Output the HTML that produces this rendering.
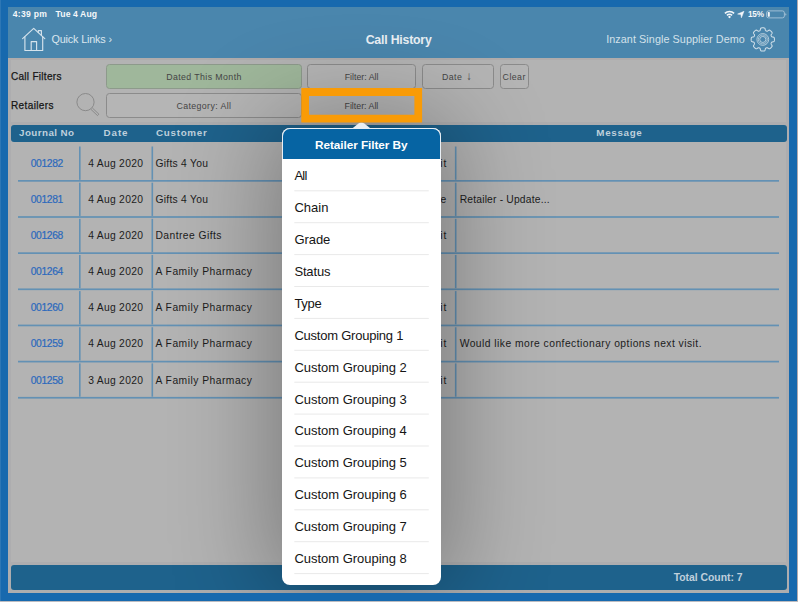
<!DOCTYPE html>
<html lang="en">
<head>
<meta charset="utf-8">
<title>Call History</title>
<style>
html,body{margin:0;padding:0;}
body{width:798px;height:602px;overflow:hidden;background:#1769ae;position:relative;font-family:"Liberation Sans",sans-serif;}
#edgeR{position:absolute;left:797px;top:0;width:1px;height:602px;background:#b3aaad;}
#edgeB{position:absolute;left:0;top:601px;width:798px;height:1px;background:#bdbcc0;}
#edgeL{position:absolute;left:0;top:0;width:1px;height:601px;background:#2d77b5;}
#app{position:absolute;left:0;top:0;width:798px;height:602px;background:#adadaf;clip-path:inset(7px 9px 9px 8px);}
#app div,#app svg,#ann div,#ann svg,#ann span{position:absolute;}
.t{position:absolute;white-space:nowrap;}
.stroke{-webkit-text-stroke:0.25px #161616;}
.jn{-webkit-text-stroke:0.2px #2b69bd;}
#hdr{left:8px;top:7px;width:781px;height:50.5px;background:#4a86ad;}
#hdrline{left:8px;top:57.5px;width:781px;height:2px;background:#b0acac;}
.btn{box-sizing:border-box;border:1px solid #8b8b8b;border-radius:3.5px;background:#b5b5b5;}
#thead{left:11px;top:124.7px;width:776px;height:17.6px;border-radius:3px;background:#1e628c;}
#tfoot{left:11px;top:564.5px;width:776px;height:25.5px;border-radius:3px;background:#1e628c;}
.hl{left:18px;width:761px;height:1.8px;background:#6391b4;}
.vl{width:1.6px;height:33.3px;background:#6391b4;}
#pop{left:282px;top:128px;width:159px;height:457.4px;border-radius:8px;background:#fff;box-shadow:0 0 100px 10px rgba(0,0,0,0.33);}
#pophead{left:0;top:0;width:159px;height:31px;border-radius:8px 8px 0 0;background:#0664a3;box-sizing:border-box;border:1px solid #e9eff5;border-bottom:none;}
.sep{left:12.4px;width:134.5px;height:1px;background:#e8e8e8;}
#orange{left:301.3px;top:88px;width:120.8px;height:34.5px;box-sizing:border-box;border:7.7px solid #f99b06;}
</style>
</head>
<body>
<div id="app">
  <div id="hdr"></div>
  <div id="hdrline"></div>
  <div style="left:10.6px;top:59.5px;width:775.6px;height:62.2px;background:#b3b3b3"></div>
  <div style="left:10.6px;top:124.7px;width:775.6px;height:437.5px;background:#b3b3b3"></div>
  <!-- house -->
  <svg style="left:20px;top:25px" width="28" height="28" viewBox="20 25 28 28" fill="none" stroke="#d6e3ec" stroke-width="1.15" stroke-linejoin="round" stroke-linecap="round">
    <path d="M22.6 38.6 L33.7 28.3 L44.8 38.6"/>
    <path d="M24.9 36.8 V50.5 H42.7 V36.8"/>
    <path d="M31.2 50.5 V41.6 H36.6 V50.5"/>
    <path d="M38.3 32.4 V30.6 H41.4 V35.3"/>
  </svg>
  <!-- gear -->
  <svg style="left:749px;top:26px" width="28" height="28" viewBox="-14 -14 28 28" fill="none" stroke="#d0dfe9" stroke-width="1.1">
    <g transform="translate(-0.2,-0.55) scale(0.95)"><path d="M0.00 -12.24 L0.16 -12.24 L0.32 -12.24 L0.48 -12.23 L0.64 -12.23 L0.80 -12.21 L0.96 -12.20 L1.12 -12.18 L1.28 -12.16 L1.44 -12.13 L1.59 -12.09 L1.75 -12.04 L1.89 -11.96 L2.04 -11.86 L2.17 -11.71 L2.29 -11.51 L2.39 -11.24 L2.47 -10.92 L2.54 -10.57 L2.60 -10.24 L2.67 -9.95 L2.74 -9.71 L2.82 -9.53 L2.92 -9.40 L3.02 -9.29 L3.12 -9.20 L3.23 -9.13 L3.34 -9.07 L3.46 -9.01 L3.57 -8.96 L3.69 -8.91 L3.81 -8.86 L3.93 -8.82 L4.05 -8.78 L4.17 -8.74 L4.30 -8.72 L4.43 -8.70 L4.58 -8.71 L4.74 -8.74 L4.93 -8.81 L5.15 -8.92 L5.40 -9.08 L5.68 -9.27 L5.97 -9.47 L6.26 -9.64 L6.52 -9.76 L6.75 -9.82 L6.94 -9.83 L7.12 -9.80 L7.28 -9.74 L7.42 -9.67 L7.56 -9.59 L7.69 -9.50 L7.82 -9.40 L7.95 -9.31 L8.07 -9.20 L8.19 -9.10 L8.31 -8.99 L8.43 -8.88 L8.54 -8.77 L8.66 -8.66 L8.77 -8.54 L8.88 -8.43 L8.99 -8.31 L9.10 -8.19 L9.20 -8.07 L9.31 -7.95 L9.40 -7.82 L9.50 -7.69 L9.59 -7.56 L9.67 -7.42 L9.74 -7.28 L9.80 -7.12 L9.83 -6.94 L9.82 -6.75 L9.76 -6.52 L9.64 -6.26 L9.47 -5.97 L9.27 -5.68 L9.08 -5.40 L8.92 -5.15 L8.81 -4.93 L8.74 -4.74 L8.71 -4.58 L8.70 -4.43 L8.72 -4.30 L8.74 -4.17 L8.78 -4.05 L8.82 -3.93 L8.86 -3.81 L8.91 -3.69 L8.96 -3.57 L9.01 -3.46 L9.07 -3.34 L9.13 -3.23 L9.20 -3.12 L9.29 -3.02 L9.40 -2.92 L9.53 -2.82 L9.71 -2.74 L9.95 -2.67 L10.24 -2.60 L10.57 -2.54 L10.92 -2.47 L11.24 -2.39 L11.51 -2.29 L11.71 -2.17 L11.86 -2.04 L11.96 -1.89 L12.04 -1.75 L12.09 -1.59 L12.13 -1.44 L12.16 -1.28 L12.18 -1.12 L12.20 -0.96 L12.21 -0.80 L12.23 -0.64 L12.23 -0.48 L12.24 -0.32 L12.24 -0.16 L12.24 -0.00 L12.24 0.16 L12.24 0.32 L12.23 0.48 L12.23 0.64 L12.21 0.80 L12.20 0.96 L12.18 1.12 L12.16 1.28 L12.13 1.44 L12.09 1.59 L12.04 1.75 L11.96 1.89 L11.86 2.04 L11.71 2.17 L11.51 2.29 L11.24 2.39 L10.92 2.47 L10.57 2.54 L10.24 2.60 L9.95 2.67 L9.71 2.74 L9.53 2.82 L9.40 2.92 L9.29 3.02 L9.20 3.12 L9.13 3.23 L9.07 3.34 L9.01 3.46 L8.96 3.57 L8.91 3.69 L8.86 3.81 L8.82 3.93 L8.78 4.05 L8.74 4.17 L8.72 4.30 L8.70 4.43 L8.71 4.58 L8.74 4.74 L8.81 4.93 L8.92 5.15 L9.08 5.40 L9.27 5.68 L9.47 5.97 L9.64 6.26 L9.76 6.52 L9.82 6.75 L9.83 6.94 L9.80 7.12 L9.74 7.28 L9.67 7.42 L9.59 7.56 L9.50 7.69 L9.40 7.82 L9.31 7.95 L9.20 8.07 L9.10 8.19 L8.99 8.31 L8.88 8.43 L8.77 8.54 L8.66 8.66 L8.54 8.77 L8.43 8.88 L8.31 8.99 L8.19 9.10 L8.07 9.20 L7.95 9.31 L7.82 9.40 L7.69 9.50 L7.56 9.59 L7.42 9.67 L7.28 9.74 L7.12 9.80 L6.94 9.83 L6.75 9.82 L6.52 9.76 L6.26 9.64 L5.97 9.47 L5.68 9.27 L5.40 9.08 L5.15 8.92 L4.93 8.81 L4.74 8.74 L4.58 8.71 L4.43 8.70 L4.30 8.72 L4.17 8.74 L4.05 8.78 L3.93 8.82 L3.81 8.86 L3.69 8.91 L3.57 8.96 L3.46 9.01 L3.34 9.07 L3.23 9.13 L3.12 9.20 L3.02 9.29 L2.92 9.40 L2.82 9.53 L2.74 9.71 L2.67 9.95 L2.60 10.24 L2.54 10.57 L2.47 10.92 L2.39 11.24 L2.29 11.51 L2.17 11.71 L2.04 11.86 L1.89 11.96 L1.75 12.04 L1.59 12.09 L1.44 12.13 L1.28 12.16 L1.12 12.18 L0.96 12.20 L0.80 12.21 L0.64 12.23 L0.48 12.23 L0.32 12.24 L0.16 12.24 L0.00 12.24 L-0.16 12.24 L-0.32 12.24 L-0.48 12.23 L-0.64 12.23 L-0.80 12.21 L-0.96 12.20 L-1.12 12.18 L-1.28 12.16 L-1.44 12.13 L-1.59 12.09 L-1.75 12.04 L-1.89 11.96 L-2.04 11.86 L-2.17 11.71 L-2.29 11.51 L-2.39 11.24 L-2.47 10.92 L-2.54 10.57 L-2.60 10.24 L-2.67 9.95 L-2.74 9.71 L-2.82 9.53 L-2.92 9.40 L-3.02 9.29 L-3.12 9.20 L-3.23 9.13 L-3.34 9.07 L-3.46 9.01 L-3.57 8.96 L-3.69 8.91 L-3.81 8.86 L-3.93 8.82 L-4.05 8.78 L-4.17 8.74 L-4.30 8.72 L-4.43 8.70 L-4.58 8.71 L-4.74 8.74 L-4.93 8.81 L-5.15 8.92 L-5.40 9.08 L-5.68 9.27 L-5.97 9.47 L-6.26 9.64 L-6.52 9.76 L-6.75 9.82 L-6.94 9.83 L-7.12 9.80 L-7.28 9.74 L-7.42 9.67 L-7.56 9.59 L-7.69 9.50 L-7.82 9.40 L-7.95 9.31 L-8.07 9.20 L-8.19 9.10 L-8.31 8.99 L-8.43 8.88 L-8.54 8.77 L-8.66 8.66 L-8.77 8.54 L-8.88 8.43 L-8.99 8.31 L-9.10 8.19 L-9.20 8.07 L-9.31 7.95 L-9.40 7.82 L-9.50 7.69 L-9.59 7.56 L-9.67 7.42 L-9.74 7.28 L-9.80 7.12 L-9.83 6.94 L-9.82 6.75 L-9.76 6.52 L-9.64 6.26 L-9.47 5.97 L-9.27 5.68 L-9.08 5.40 L-8.92 5.15 L-8.81 4.93 L-8.74 4.74 L-8.71 4.58 L-8.70 4.43 L-8.72 4.30 L-8.74 4.17 L-8.78 4.05 L-8.82 3.93 L-8.86 3.81 L-8.91 3.69 L-8.96 3.57 L-9.01 3.46 L-9.07 3.34 L-9.13 3.23 L-9.20 3.12 L-9.29 3.02 L-9.40 2.92 L-9.53 2.82 L-9.71 2.74 L-9.95 2.67 L-10.24 2.60 L-10.57 2.54 L-10.92 2.47 L-11.24 2.39 L-11.51 2.29 L-11.71 2.17 L-11.86 2.04 L-11.96 1.89 L-12.04 1.75 L-12.09 1.59 L-12.13 1.44 L-12.16 1.28 L-12.18 1.12 L-12.20 0.96 L-12.21 0.80 L-12.23 0.64 L-12.23 0.48 L-12.24 0.32 L-12.24 0.16 L-12.24 0.00 L-12.24 -0.16 L-12.24 -0.32 L-12.23 -0.48 L-12.23 -0.64 L-12.21 -0.80 L-12.20 -0.96 L-12.18 -1.12 L-12.16 -1.28 L-12.13 -1.44 L-12.09 -1.59 L-12.04 -1.75 L-11.96 -1.89 L-11.86 -2.04 L-11.71 -2.17 L-11.51 -2.29 L-11.24 -2.39 L-10.92 -2.47 L-10.57 -2.54 L-10.24 -2.60 L-9.95 -2.67 L-9.71 -2.74 L-9.53 -2.82 L-9.40 -2.92 L-9.29 -3.02 L-9.20 -3.12 L-9.13 -3.23 L-9.07 -3.34 L-9.01 -3.46 L-8.96 -3.57 L-8.91 -3.69 L-8.86 -3.81 L-8.82 -3.93 L-8.78 -4.05 L-8.74 -4.17 L-8.72 -4.30 L-8.70 -4.43 L-8.71 -4.58 L-8.74 -4.74 L-8.81 -4.93 L-8.92 -5.15 L-9.08 -5.40 L-9.27 -5.68 L-9.47 -5.97 L-9.64 -6.26 L-9.76 -6.52 L-9.82 -6.75 L-9.83 -6.94 L-9.80 -7.12 L-9.74 -7.28 L-9.67 -7.42 L-9.59 -7.56 L-9.50 -7.69 L-9.40 -7.82 L-9.31 -7.95 L-9.20 -8.07 L-9.10 -8.19 L-8.99 -8.31 L-8.88 -8.43 L-8.77 -8.54 L-8.66 -8.66 L-8.54 -8.77 L-8.43 -8.88 L-8.31 -8.99 L-8.19 -9.10 L-8.07 -9.20 L-7.95 -9.31 L-7.82 -9.40 L-7.69 -9.50 L-7.56 -9.59 L-7.42 -9.67 L-7.28 -9.74 L-7.12 -9.80 L-6.94 -9.83 L-6.75 -9.82 L-6.52 -9.76 L-6.26 -9.64 L-5.97 -9.47 L-5.68 -9.27 L-5.40 -9.08 L-5.15 -8.92 L-4.93 -8.81 L-4.74 -8.74 L-4.58 -8.71 L-4.43 -8.70 L-4.30 -8.72 L-4.17 -8.74 L-4.05 -8.78 L-3.93 -8.82 L-3.81 -8.86 L-3.69 -8.91 L-3.57 -8.96 L-3.46 -9.01 L-3.34 -9.07 L-3.23 -9.13 L-3.12 -9.20 L-3.02 -9.29 L-2.92 -9.40 L-2.82 -9.53 L-2.74 -9.71 L-2.67 -9.95 L-2.60 -10.24 L-2.54 -10.57 L-2.47 -10.92 L-2.39 -11.24 L-2.29 -11.51 L-2.17 -11.71 L-2.04 -11.86 L-1.89 -11.96 L-1.75 -12.04 L-1.59 -12.09 L-1.44 -12.13 L-1.28 -12.16 L-1.12 -12.18 L-0.96 -12.20 L-0.80 -12.21 L-0.64 -12.23 L-0.48 -12.23 L-0.32 -12.24 L-0.16 -12.24 Z" stroke-linejoin="round"/><circle r="6.2" stroke-width="0.8"/><circle r="4.7" stroke-width="0.7"/><circle r="3.2" stroke-width="0.8"/></g>
  </svg>
  <!-- status icons -->
  <svg style="left:722px;top:8px" width="68" height="13" viewBox="722 8 68 13">
    <g fill="none" stroke="#f4f7fa" stroke-width="1.6" stroke-linecap="butt">
      <path d="M724.9 13.4 A6.6 6.6 0 0 1 734.1 13.4"/>
      <path d="M726.9 15.4 A3.9 3.9 0 0 1 732.1 15.4"/>
    </g>
    <circle cx="729.5" cy="17" r="1.15" fill="#f4f7fa"/>
    <path d="M744 11.3 L737.6 14.1 L740.9 14.6 L741.4 17.8 Z" fill="#f4f7fa" stroke="#f4f7fa" stroke-width="0.5" stroke-linejoin="round"/>
    <rect x="766.6" y="10.9" width="17.8" height="7" rx="2" fill="none" stroke="#a9c4d8" stroke-width="0.9"/>
    <rect x="767.8" y="12.1" width="2" height="4.6" rx="0.6" fill="#f4f7fa"/>
    <path d="M785.3 13.2 Q786.4 13.5 786.4 14.4 Q786.4 15.3 785.3 15.6 Z" fill="#a9c4d8"/>
  </svg>
  <!-- filter buttons -->
  <div class="btn" style="left:106px;top:64px;width:196px;height:25px;background:#9fb79b;border-color:#8d9a8b"></div>
  <div class="btn" style="left:307px;top:64px;width:108.5px;height:25px"></div>
  <div class="btn" style="left:421.5px;top:64px;width:72.5px;height:25px"></div>
  <div class="btn" style="left:500px;top:64px;width:28.8px;height:25px"></div>
  <div class="btn" style="left:106px;top:93.2px;width:196px;height:25px"></div>
  <div class="btn" style="left:307px;top:93.2px;width:108.5px;height:25px"></div>
  <!-- magnifier -->
  <svg style="left:74px;top:91px" width="28" height="27" viewBox="74 91 28 27" fill="none" stroke="#858585" stroke-width="0.9">
    <circle cx="85.5" cy="102.1" r="8.6"/>
    <path d="M92.3 107.9 L98.9 114.2 L97.5 115.6 L90.9 109.3"/>
  </svg>
  <div id="thead"></div>
  <svg style="left:0;top:0" width="798" height="602" viewBox="0 0 798 602" fill="#6391b4">
<rect x="18" y="180.00" width="761" height="1.7"/>
<rect x="79.0" y="146.50" width="1.6" height="33.3"/>
<rect x="151.5" y="146.50" width="1.6" height="33.3"/>
<rect x="454.9" y="146.50" width="1.6" height="33.3"/>
<rect x="18" y="216.15" width="761" height="1.7"/>
<rect x="79.0" y="182.65" width="1.6" height="33.3"/>
<rect x="151.5" y="182.65" width="1.6" height="33.3"/>
<rect x="454.9" y="182.65" width="1.6" height="33.3"/>
<rect x="18" y="252.30" width="761" height="1.7"/>
<rect x="79.0" y="218.80" width="1.6" height="33.3"/>
<rect x="151.5" y="218.80" width="1.6" height="33.3"/>
<rect x="454.9" y="218.80" width="1.6" height="33.3"/>
<rect x="18" y="288.45" width="761" height="1.7"/>
<rect x="79.0" y="254.95" width="1.6" height="33.3"/>
<rect x="151.5" y="254.95" width="1.6" height="33.3"/>
<rect x="454.9" y="254.95" width="1.6" height="33.3"/>
<rect x="18" y="324.60" width="761" height="1.7"/>
<rect x="79.0" y="291.10" width="1.6" height="33.3"/>
<rect x="151.5" y="291.10" width="1.6" height="33.3"/>
<rect x="454.9" y="291.10" width="1.6" height="33.3"/>
<rect x="18" y="360.75" width="761" height="1.7"/>
<rect x="79.0" y="327.25" width="1.6" height="33.3"/>
<rect x="151.5" y="327.25" width="1.6" height="33.3"/>
<rect x="454.9" y="327.25" width="1.6" height="33.3"/>
<rect x="18" y="396.90" width="761" height="1.7"/>
<rect x="79.0" y="363.40" width="1.6" height="33.3"/>
<rect x="151.5" y="363.40" width="1.6" height="33.3"/>
<rect x="454.9" y="363.40" width="1.6" height="33.3"/>
</svg>
  <div id="tfoot"></div>
<span class="t" style="left:12.80px;top:9.00px;font-size:8.6px;line-height:11px;font-weight:700;color:#f4f7fa;letter-spacing:0.286px;">4:39 pm</span>
<span class="t" style="left:55.60px;top:9.00px;font-size:8.6px;line-height:11px;font-weight:700;color:#f4f7fa;letter-spacing:0.101px;">Tue 4 Aug</span>
<span class="t" style="left:747.90px;top:9.00px;font-size:8.2px;line-height:11px;font-weight:700;color:#f4f7fa;letter-spacing:-0.095px;">15%</span>
<span class="t" style="left:51.50px;top:32.00px;font-size:10.8px;line-height:14px;font-weight:400;color:#dbe7ef;letter-spacing:-0.159px;">Quick Links ›</span>
<span class="t" style="left:365.70px;top:32.00px;font-size:12.3px;line-height:16px;font-weight:700;color:#e9eff4;letter-spacing:-0.204px;">Call History</span>
<span class="t" style="left:606.20px;top:32.00px;font-size:10.8px;line-height:14px;font-weight:400;color:#d3e1ea;letter-spacing:0.068px;">Inzant Single Supplier Demo</span>
<span class="t stroke" style="left:11.00px;top:70.00px;font-size:10px;line-height:13px;font-weight:400;color:#161616;letter-spacing:0.288px;">Call Filters</span>
<span class="t stroke" style="left:11.00px;top:99.00px;font-size:10px;line-height:13px;font-weight:400;color:#161616;letter-spacing:0.379px;">Retailers</span>
<span class="t" style="left:166.20px;top:72.00px;font-size:8.8px;line-height:11px;font-weight:400;color:#454545;letter-spacing:0.395px;">Dated This Month</span>
<span class="t" style="left:176.40px;top:101.00px;font-size:8.8px;line-height:11px;font-weight:400;color:#454545;letter-spacing:0.394px;">Category: All</span>
<span class="t" style="left:344.70px;top:72.00px;font-size:8.8px;line-height:11px;font-weight:400;color:#454545;letter-spacing:0.007px;">Filter: All</span>
<span class="t" style="left:344.50px;top:101.00px;font-size:8.8px;line-height:11px;font-weight:400;color:#454545;letter-spacing:0.007px;">Filter: All</span>
<span class="t" style="left:442.10px;top:72.00px;font-size:8.8px;line-height:11px;font-weight:400;color:#454545;letter-spacing:0.369px;">Date</span>
<span class="t" style="left:466.20px;top:69.00px;font-size:11.5px;line-height:15px;font-weight:400;color:#454545;letter-spacing:0.850px;">↓</span>
<span class="t" style="left:502.60px;top:72.00px;font-size:8.8px;line-height:11px;font-weight:400;color:#454545;letter-spacing:0.442px;">Clear</span>
<span class="t" style="left:19.00px;top:126.00px;font-size:9.8px;line-height:13px;font-weight:700;color:#bfd0dc;letter-spacing:0.436px;">Journal No</span>
<span class="t" style="left:103.60px;top:126.00px;font-size:9.8px;line-height:13px;font-weight:700;color:#bfd0dc;letter-spacing:0.883px;">Date</span>
<span class="t" style="left:156.00px;top:126.00px;font-size:9.8px;line-height:13px;font-weight:700;color:#bfd0dc;letter-spacing:0.724px;">Customer</span>
<span class="t" style="left:596.30px;top:126.00px;font-size:9.8px;line-height:13px;font-weight:700;color:#bfd0dc;letter-spacing:0.685px;">Message</span>
<span class="t jn" style="left:30.70px;top:157.00px;font-size:10.3px;line-height:13px;font-weight:400;color:#2b69bd;letter-spacing:-0.355px;">001282</span>
<span class="t" style="left:88.20px;top:157.00px;font-size:10.3px;line-height:13px;font-weight:400;color:#1c1c1c;letter-spacing:0.288px;">4 Aug 2020</span>
<span class="t" style="left:155.50px;top:157.00px;font-size:10.3px;line-height:13px;font-weight:400;color:#1c1c1c;letter-spacing:0.259px;">Gifts 4 You</span>
<span class="t" style="left:423.80px;top:157.00px;font-size:10.3px;line-height:13px;font-weight:400;color:#1c1c1c;letter-spacing:0.805px;">Visit</span>
<span class="t jn" style="left:30.70px;top:193.00px;font-size:10.3px;line-height:13px;font-weight:400;color:#2b69bd;letter-spacing:-0.355px;">001281</span>
<span class="t" style="left:88.20px;top:193.00px;font-size:10.3px;line-height:13px;font-weight:400;color:#1c1c1c;letter-spacing:0.288px;">4 Aug 2020</span>
<span class="t" style="left:155.50px;top:193.00px;font-size:10.3px;line-height:13px;font-weight:400;color:#1c1c1c;letter-spacing:0.259px;">Gifts 4 You</span>
<span class="t" style="left:415.30px;top:193.00px;font-size:10.3px;line-height:13px;font-weight:400;color:#1c1c1c;letter-spacing:0.305px;">Phone</span>
<span class="t" style="left:459.70px;top:193.00px;font-size:10.3px;line-height:13px;font-weight:400;color:#1c1c1c;letter-spacing:0.183px;">Retailer - Update...</span>
<span class="t jn" style="left:30.70px;top:229.00px;font-size:10.3px;line-height:13px;font-weight:400;color:#2b69bd;letter-spacing:-0.355px;">001268</span>
<span class="t" style="left:88.20px;top:229.00px;font-size:10.3px;line-height:13px;font-weight:400;color:#1c1c1c;letter-spacing:0.288px;">4 Aug 2020</span>
<span class="t" style="left:155.50px;top:229.00px;font-size:10.3px;line-height:13px;font-weight:400;color:#1c1c1c;letter-spacing:0.436px;">Dantree Gifts</span>
<span class="t" style="left:423.80px;top:229.00px;font-size:10.3px;line-height:13px;font-weight:400;color:#1c1c1c;letter-spacing:0.805px;">Visit</span>
<span class="t jn" style="left:30.70px;top:265.00px;font-size:10.3px;line-height:13px;font-weight:400;color:#2b69bd;letter-spacing:-0.355px;">001264</span>
<span class="t" style="left:88.20px;top:265.00px;font-size:10.3px;line-height:13px;font-weight:400;color:#1c1c1c;letter-spacing:0.288px;">4 Aug 2020</span>
<span class="t" style="left:155.50px;top:265.00px;font-size:10.3px;line-height:13px;font-weight:400;color:#1c1c1c;letter-spacing:0.481px;">A Family Pharmacy</span>
<span class="t jn" style="left:30.70px;top:301.00px;font-size:10.3px;line-height:13px;font-weight:400;color:#2b69bd;letter-spacing:-0.355px;">001260</span>
<span class="t" style="left:88.20px;top:301.00px;font-size:10.3px;line-height:13px;font-weight:400;color:#1c1c1c;letter-spacing:0.288px;">4 Aug 2020</span>
<span class="t" style="left:155.50px;top:301.00px;font-size:10.3px;line-height:13px;font-weight:400;color:#1c1c1c;letter-spacing:0.481px;">A Family Pharmacy</span>
<span class="t" style="left:423.80px;top:301.00px;font-size:10.3px;line-height:13px;font-weight:400;color:#1c1c1c;letter-spacing:0.805px;">Visit</span>
<span class="t jn" style="left:30.70px;top:337.00px;font-size:10.3px;line-height:13px;font-weight:400;color:#2b69bd;letter-spacing:-0.355px;">001259</span>
<span class="t" style="left:88.20px;top:337.00px;font-size:10.3px;line-height:13px;font-weight:400;color:#1c1c1c;letter-spacing:0.288px;">4 Aug 2020</span>
<span class="t" style="left:155.50px;top:337.00px;font-size:10.3px;line-height:13px;font-weight:400;color:#1c1c1c;letter-spacing:0.481px;">A Family Pharmacy</span>
<span class="t" style="left:423.80px;top:337.00px;font-size:10.3px;line-height:13px;font-weight:400;color:#1c1c1c;letter-spacing:0.805px;">Visit</span>
<span class="t" style="left:459.70px;top:337.00px;font-size:10.3px;line-height:13px;font-weight:400;color:#1c1c1c;letter-spacing:0.463px;">Would like more confectionary options next visit.</span>
<span class="t jn" style="left:30.70px;top:374.00px;font-size:10.3px;line-height:13px;font-weight:400;color:#2b69bd;letter-spacing:-0.355px;">001258</span>
<span class="t" style="left:88.20px;top:374.00px;font-size:10.3px;line-height:13px;font-weight:400;color:#1c1c1c;letter-spacing:0.288px;">3 Aug 2020</span>
<span class="t" style="left:155.50px;top:374.00px;font-size:10.3px;line-height:13px;font-weight:400;color:#1c1c1c;letter-spacing:0.481px;">A Family Pharmacy</span>
<span class="t" style="left:423.80px;top:374.00px;font-size:10.3px;line-height:13px;font-weight:400;color:#1c1c1c;letter-spacing:0.805px;">Visit</span>
<span class="t" style="left:673.70px;top:571.00px;font-size:10.4px;line-height:14px;font-weight:700;color:#c0d0dc;letter-spacing:-0.014px;">Total Count: 7</span>
  <div id="pop">
    <div id="pophead"></div>
    <svg style="left:0;top:0" width="159" height="458" viewBox="282 128 159 458" fill="#e9e9e9">
<rect x="294.3" y="190.30" width="134.5" height="1"/>
<rect x="294.3" y="222.20" width="134.5" height="1"/>
<rect x="294.3" y="254.10" width="134.5" height="1"/>
<rect x="294.3" y="286.00" width="134.5" height="1"/>
<rect x="294.3" y="317.90" width="134.5" height="1"/>
<rect x="294.3" y="349.80" width="134.5" height="1"/>
<rect x="294.3" y="381.70" width="134.5" height="1"/>
<rect x="294.3" y="413.60" width="134.5" height="1"/>
<rect x="294.3" y="445.50" width="134.5" height="1"/>
<rect x="294.3" y="477.40" width="134.5" height="1"/>
<rect x="294.3" y="509.30" width="134.5" height="1"/>
<rect x="294.3" y="541.20" width="134.5" height="1"/>
<rect x="294.3" y="573.10" width="134.5" height="1"/>
</svg>
  </div>
</div>
<div id="ann">
  <svg style="left:350px;top:121px" width="24" height="9" viewBox="350 121 24 9"><path d="M351.5 129 L358.5 123.6 Q361.4 121.6 364.3 123.6 L371.3 129 Z" fill="#e8eef4"/></svg>
  <svg style="left:300px;top:86px" width="124" height="38" viewBox="300 86 124 38"><path fill-rule="evenodd" fill="#f99b06" d="M301.3 88 H422.1 V122.6 H301.3 Z M309 95.9 V114.8 H414.4 V95.9 Z"/></svg>
<!--ORTEXT-->
<span class="t pop" style="left:315.00px;top:138.00px;font-size:11.8px;line-height:15px;font-weight:700;color:#ffffff;letter-spacing:-0.074px;">Retailer Filter By</span>
<span class="t pop" style="left:294.40px;top:167.00px;font-size:13px;line-height:17px;font-weight:400;color:#151515;letter-spacing:-0.777px;">All</span>
<span class="t pop" style="left:294.40px;top:199.00px;font-size:13px;line-height:17px;font-weight:400;color:#151515;letter-spacing:0.033px;">Chain</span>
<span class="t pop" style="left:294.40px;top:231.00px;font-size:13px;line-height:17px;font-weight:400;color:#151515;letter-spacing:-0.060px;">Grade</span>
<span class="t pop" style="left:294.40px;top:263.00px;font-size:13px;line-height:17px;font-weight:400;color:#151515;letter-spacing:-0.152px;">Status</span>
<span class="t pop" style="left:294.40px;top:295.00px;font-size:13px;line-height:17px;font-weight:400;color:#151515;letter-spacing:-0.262px;">Type</span>
<span class="t pop" style="left:294.40px;top:327.00px;font-size:13px;line-height:17px;font-weight:400;color:#151515;letter-spacing:-0.227px;">Custom Grouping 1</span>
<span class="t pop" style="left:294.40px;top:359.00px;font-size:13px;line-height:17px;font-weight:400;color:#151515;letter-spacing:-0.021px;">Custom Grouping 2</span>
<span class="t pop" style="left:294.40px;top:391.00px;font-size:13px;line-height:17px;font-weight:400;color:#151515;letter-spacing:-0.021px;">Custom Grouping 3</span>
<span class="t pop" style="left:294.40px;top:422.00px;font-size:13px;line-height:17px;font-weight:400;color:#151515;letter-spacing:-0.021px;">Custom Grouping 4</span>
<span class="t pop" style="left:294.40px;top:454.00px;font-size:13px;line-height:17px;font-weight:400;color:#151515;letter-spacing:-0.021px;">Custom Grouping 5</span>
<span class="t pop" style="left:294.40px;top:486.00px;font-size:13px;line-height:17px;font-weight:400;color:#151515;letter-spacing:-0.021px;">Custom Grouping 6</span>
<span class="t pop" style="left:294.40px;top:518.00px;font-size:13px;line-height:17px;font-weight:400;color:#151515;letter-spacing:-0.021px;">Custom Grouping 7</span>
<span class="t pop" style="left:294.40px;top:550.00px;font-size:13px;line-height:17px;font-weight:400;color:#151515;letter-spacing:-0.021px;">Custom Grouping 8</span>
</div>
<div id="edgeL"></div><div id="edgeR"></div><div id="edgeB"></div>
</body>
</html>
